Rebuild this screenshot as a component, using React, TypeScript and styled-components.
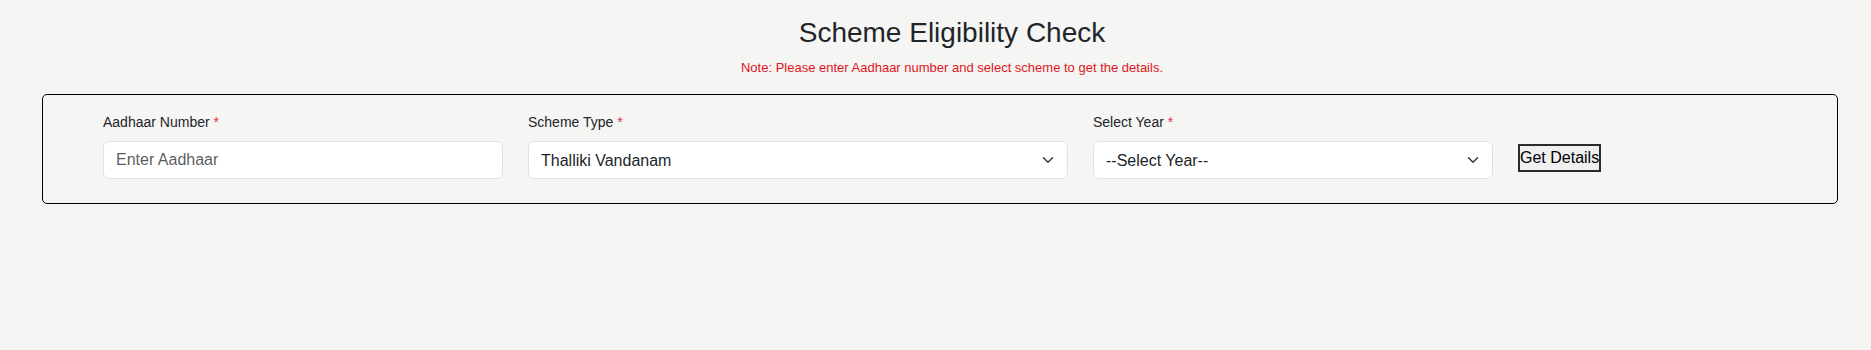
import React, { useState } from "react";
import { styled, createGlobalStyle } from "styled-components";

const GlobalStyle = createGlobalStyle`
  body {
    margin: 0;
    background: #f5f5f3;
    font-family: "Liberation Sans", Arial, sans-serif;
    color: #212529;
  }
`;

const schemes = ["Thalliki Vandanam", "Annadata Sukhibhava", "Deepam"];
const years = ["--Select Year--", "2024-25", "2025-26"];

const ChevronIcon = () => (
  <svg width="16" height="12" viewBox="0 0 16 16" fill="none">
    <path
      d="m2 5 6 6 6-6"
      stroke="#343a40"
      strokeWidth="2"
      strokeLinecap="round"
      strokeLinejoin="round"
    />
  </svg>
);

interface ISelectField {
  label: string;
  width: number;
  options: string[];
  value: string;
  onChange: (value: string) => void;
}
const SelectField = ({ label, width, options, value, onChange }: ISelectField) => {
  return (
    <Field $width={width}>
      <Label>
        {label} <Required>*</Required>
      </Label>
      <SelectWrap>
        <StyledSelect value={value} onChange={(e) => onChange(e.target.value)}>
          {options.map((o) => (
            <option key={o}>{o}</option>
          ))}
        </StyledSelect>
        <Chevron>
          <ChevronIcon />
        </Chevron>
      </SelectWrap>
    </Field>
  );
};

const App = () => {
  const [aadhaar, setAadhaar] = useState<string>("");
  const [scheme, setScheme] = useState<string>("Thalliki Vandanam");
  const [year, setYear] = useState<string>("--Select Year--");

  return (
    <>
      <GlobalStyle />
      <StyledPage>
        <Header>
          <Title>Scheme Eligibility Check</Title>
          <Note>
            Note: Please enter Aadhaar number and select scheme to get the
            details.
          </Note>
        </Header>
        <Card>
          <Field $width={400}>
            <Label>
              Aadhaar Number <Required>*</Required>
            </Label>
            <StyledInput
              placeholder="Enter Aadhaar"
              value={aadhaar}
              onChange={(e) => setAadhaar(e.target.value)}
            />
          </Field>
          <SelectField
            label="Scheme Type"
            width={540}
            options={schemes}
            value={scheme}
            onChange={setScheme}
          />
          <SelectField
            label="Select Year"
            width={400}
            options={years}
            value={year}
            onChange={setYear}
          />
          <GetButton type="button">Get Details</GetButton>
        </Card>
      </StyledPage>
    </>
  );
};

export default App;

const StyledPage = styled.div`
  padding: 16px 33px 0 42px;
  box-sizing: border-box;
`;
const Header = styled.div`
  text-align: center;
  padding-left: 24px;
`;
const Title = styled.h3`
  margin: 0;
  font-size: 28px;
  font-weight: 400;
  line-height: 1.2;
  color: #212529;
`;
const Note = styled.p`
  margin: 8px 0 0;
  font-size: 13px;
  line-height: 1.5;
  color: #e0151f;
`;
const Card = styled.div`
  display: flex;
  align-items: flex-start;
  gap: 25px;
  margin-top: 17px;
  padding: 17px 0 24px 60px;
  border: 1px solid #000;
  border-radius: 5px;
`;
const Field = styled.div<{ $width: number }>`
  display: flex;
  flex-direction: column;
  width: ${({ $width }) => $width}px;
`;
const Label = styled.label`
  font-size: 14px;
  line-height: 1.5;
  margin-bottom: 8px;
  color: #212529;
`;
const Required = styled.span`
  color: #dc3545;
`;
const StyledInput = styled.input`
  height: 38px;
  box-sizing: border-box;
  padding: 6px 12px;
  font-family: inherit;
  font-size: 16px;
  color: #212529;
  background: #fff;
  border: 1px solid #dee2e6;
  border-radius: 6px;
  outline: none;
  &::placeholder {
    color: rgba(33, 37, 41, 0.75);
  }
`;
const SelectWrap = styled.div`
  position: relative;
`;
const StyledSelect = styled.select`
  width: 100%;
  height: 38px;
  box-sizing: border-box;
  padding: 6px 36px 6px 12px;
  font-family: inherit;
  font-size: 16px;
  color: #212529;
  background: #fff;
  border: 1px solid #dee2e6;
  border-radius: 6px;
  appearance: none;
  outline: none;
`;
const Chevron = styled.span`
  position: absolute;
  right: 12px;
  top: 13px;
  display: flex;
  pointer-events: none;
`;
const GetButton = styled.button`
  margin-top: 32px;
  padding: 0;
  font-family: "Liberation Sans", Arial, sans-serif;
  font-size: 16px;
  line-height: 24px;
  color: #000;
  background: #efefef;
  border: 2px solid #2b2b2b;
  white-space: nowrap;
  cursor: pointer;
`;
